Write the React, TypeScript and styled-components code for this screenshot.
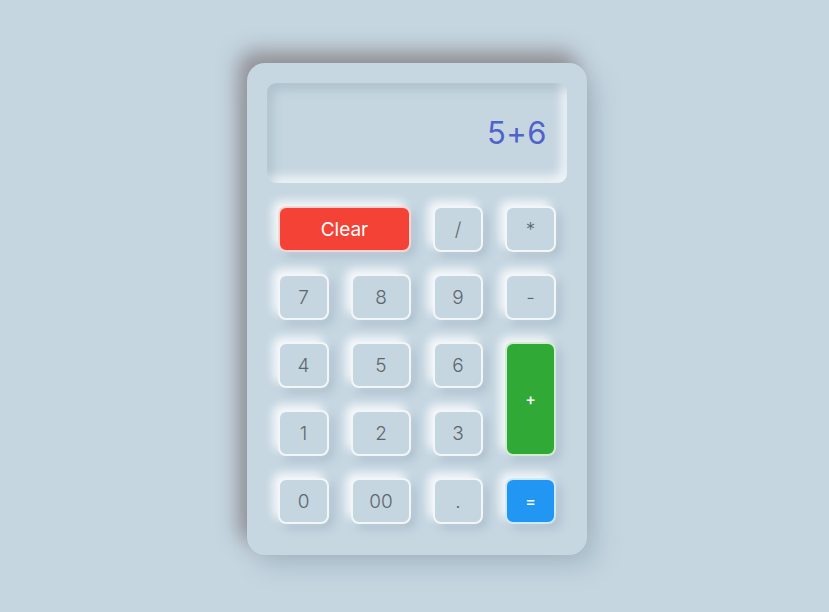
import React from "react";
import styled, { createGlobalStyle, css } from "styled-components";

const Global = createGlobalStyle`
  html, body { margin: 0; padding: 0; }
  body {
    background: #c5d6e1;
    font-family: Inter, "Noto Sans", "DejaVu Sans", sans-serif;
  }
`;

const Page = styled.div`
  min-height: 612px;
  box-sizing: border-box;
  display: flex;
  justify-content: center;
  align-items: flex-start;
  padding: 63px 0 0 5px;
`;

const Card = styled.div`
  width: 340px;
  height: 492px;
  box-sizing: border-box;
  padding: 20px;
  border-radius: 18px;
  background: #c6d7e2;
  box-shadow: -9px -12px 20px rgba(105, 90, 90, 0.55),
    10px 12px 24px rgba(95, 115, 135, 0.25);
`;

const Display = styled.div`
  height: 100px;
  box-sizing: border-box;
  border-radius: 9px;
  display: flex;
  align-items: center;
  justify-content: flex-end;
  padding: 0 20px 2px 0;
  font-size: 31px;
  font-weight: 400;
  letter-spacing: 0.5px;
  color: #4f63cb;
  background: #c5d6e1;
  box-shadow: inset 6px 7px 10px rgba(120, 140, 155, 0.25),
    inset -6px -7px 10px rgba(255, 255, 255, 0.7);
`;

const Keypad = styled.div`
  margin-top: 23px;
  padding-left: 11px;
  display: grid;
  grid-template-columns: 51px 60px 50px 51px;
  grid-auto-rows: 46px;
  column-gap: 22px;
  row-gap: 22px;
`;

type Variant = "plain" | "clear" | "plus" | "equals";

const Key = styled.button<{ $variant?: Variant; $colSpan?: number; $rowSpan?: number }>`
  box-sizing: border-box;
  margin: 0;
  padding: 0;
  border: 2px solid rgba(255, 255, 255, 0.78);
  border-radius: 8px;
  font-family: inherit;
  font-size: 19px;
  font-weight: 300;
  color: #60666d;
  background: #c5d6e1;
  display: flex;
  align-items: center;
  justify-content: center;
  box-shadow: -5px -5px 10px rgba(255, 255, 255, 0.85),
    5px 5px 10px rgba(110, 130, 150, 0.25);
  cursor: pointer;
  ${(p) => p.$colSpan && css`grid-column: span ${p.$colSpan};`}
  ${(p) => p.$rowSpan && css`grid-row: span ${p.$rowSpan};`}
  ${(p) =>
    p.$variant === "clear" &&
    css`
      background: #f44336;
      color: #ffffff;
      font-weight: 400;
    `}
  ${(p) =>
    p.$variant === "plus" &&
    css`
      background: #31a936;
      color: #ffffff;
      font-size: 16px;
      font-weight: 500;
    `}
  ${(p) =>
    p.$variant === "equals" &&
    css`
      background: #2196f3;
      color: #ffffff;
      font-size: 16px;
      font-weight: 500;
    `}
`;

export default function App() {
  return (
    <>
      <Global />
      <Page>
        <Card>
          <Display>5+6</Display>
          <Keypad>
            <Key $variant="clear" $colSpan={2}>Clear</Key>
            <Key>/</Key>
            <Key>*</Key>
            <Key>7</Key>
            <Key>8</Key>
            <Key>9</Key>
            <Key>-</Key>
            <Key>4</Key>
            <Key>5</Key>
            <Key>6</Key>
            <Key $variant="plus" $rowSpan={2}>+</Key>
            <Key>1</Key>
            <Key>2</Key>
            <Key>3</Key>
            <Key>0</Key>
            <Key>00</Key>
            <Key>.</Key>
            <Key $variant="equals">=</Key>
          </Keypad>
        </Card>
      </Page>
    </>
  );
}
